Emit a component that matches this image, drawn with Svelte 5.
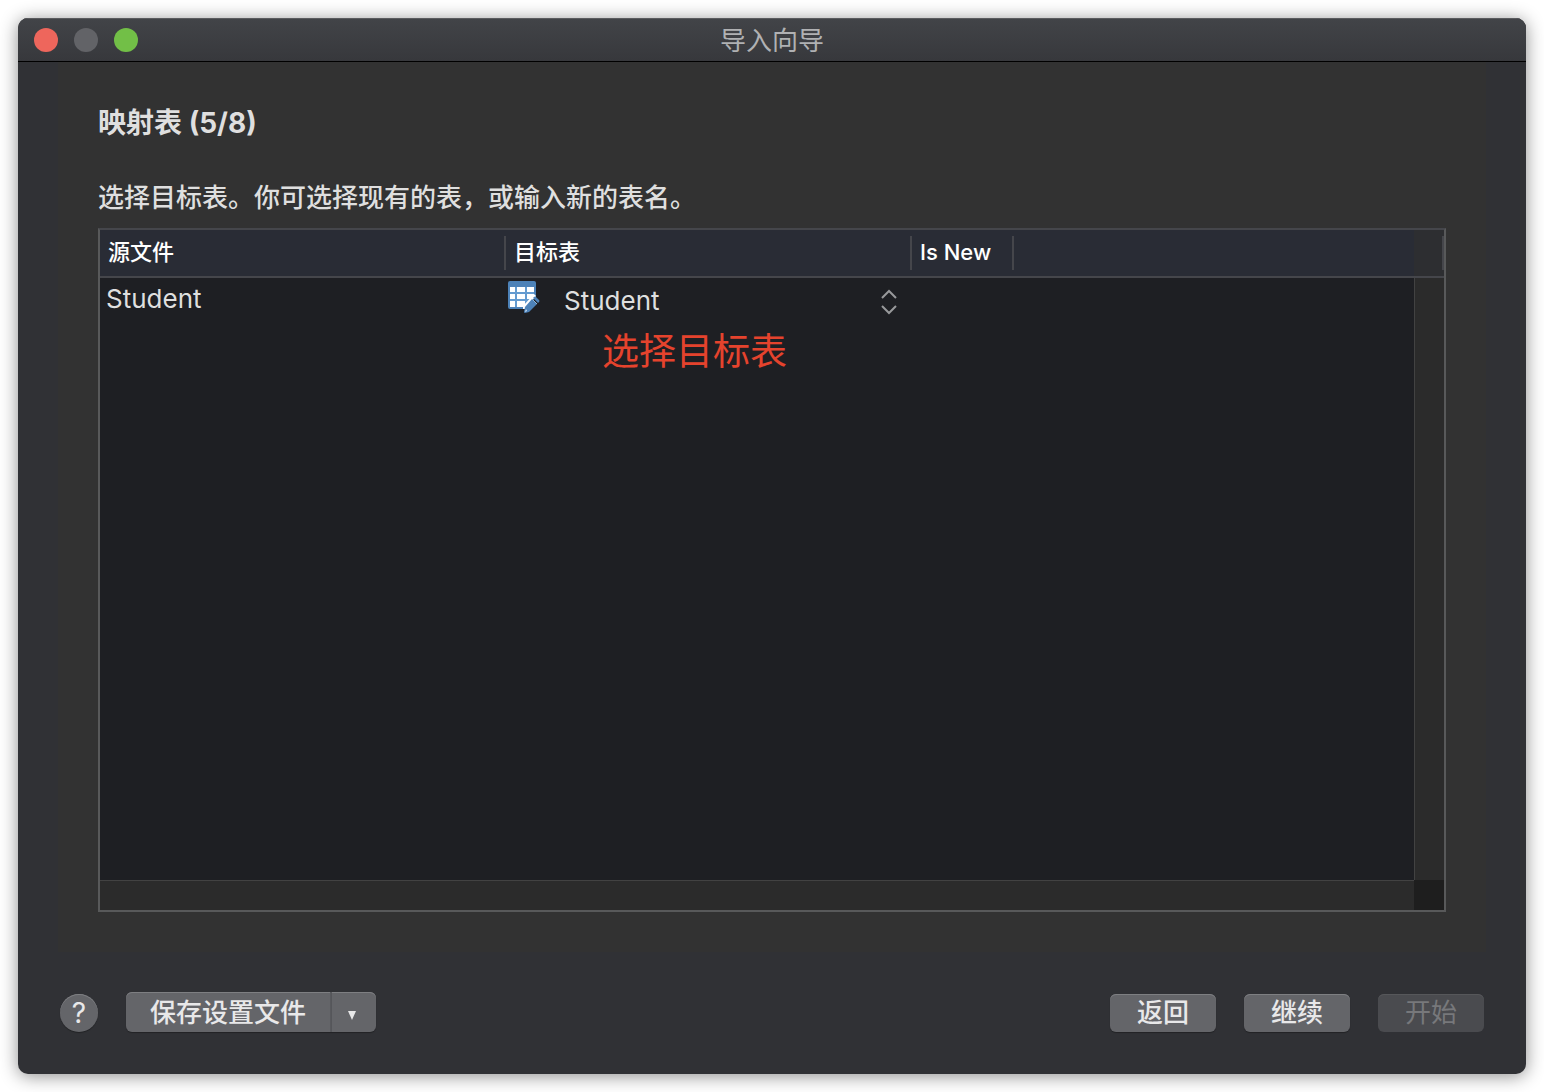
<script lang="ts">
	/**
	 * ImportWizard - Table mapping step of the import wizard window.
	 */
	interface Mapping {
		source: string;
		target: string;
	}

	const step = 5;
	const stepCount = 8;
	const tables = ['Student'];

	let mappings = $state<Mapping[]>([{ source: 'Student', target: 'Student' }]);
</script>

<main class="window" lang="zh-CN">
	<header class="titlebar">
		<div class="lights">
			<button class="light close" aria-label="关闭"></button>
			<button class="light minimize" aria-label="最小化" disabled></button>
			<button class="light zoom" aria-label="缩放"></button>
		</div>
		<span class="title">导入向导</span>
	</header>

	<section class="panel">
		<h1>映射表 ({step}/{stepCount})</h1>
		<p class="description">选择目标表。你可选择现有的表，或输入新的表名。</p>

		<div class="list">
			<table>
				<colgroup>
					<col class="col-name" />
					<col class="col-name" />
					<col class="col-new" />
					<col />
					<col class="col-scroll" />
				</colgroup>
				<thead>
					<tr>
						<th>源文件</th>
						<th>目标表</th>
						<th>Is New</th>
						<th class="filler"></th>
						<th class="corner"></th>
					</tr>
				</thead>
				<tbody>
					{#each mappings as mapping (mapping.source)}
						<tr>
							<td class="source">{mapping.source}</td>
							<td>
								<div class="target">
									<svg class="table-icon" viewBox="0 0 32 34" aria-hidden="true">
										<path d="M2 1h24a2 2 0 0 1 2 2v14L16 29H2a2 2 0 0 1-2-2V3a2 2 0 0 1 2-2z" fill="#4d82b8" />
										<path d="M2 7h24v10l-9 10H2z" fill="#649bd0" />
										<path
											d="M2 7h5v5H2zM9 7h8v5H9zM19 7h7v5h-7zM2 14h5v5H2zM9 14h8v5H9zM19 14h7v5h-7zM2 21h5v6H2zM9 21h8v6H9z"
											fill="#fff"
										/>
										<path d="M26 14l2 2-11 13h-2v-3z" fill="#fff" />
										<path d="M26 17q1-1 2 0l3 3q1 1 0 2l-1 1-5-5z" fill="#4d82b8" />
										<path d="M24 19l5 5-8 8-4 1q-1 0-1-1l1-5z" fill="#4d82b8" />
										<path d="M24 19l5 5" stroke="#8fb6db" />
										<path d="M18 29l1 2-2 1z" fill="#dceaf7" />
									</svg>
									<select aria-label="目标表" bind:value={mapping.target}>
										{#each tables as name}
											<option value={name}>{name}</option>
										{/each}
									</select>
									<svg class="chevrons" viewBox="0 0 16 26" aria-hidden="true">
										<path d="M1 9l7-7 7 7M1 17l7 7 7-7" />
									</svg>
								</div>
								<p class="note">选择目标表</p>
							</td>
							<td></td>
							<td></td>
							<td></td>
						</tr>
					{/each}
				</tbody>
			</table>
			<div class="track vertical"></div>
			<div class="track horizontal"></div>
			<div class="track-corner"></div>
		</div>
	</section>

	<footer class="actions">
		<button class="help" aria-label="帮助">?</button>
		<div class="split">
			<button class="save">保存设置文件</button>
			<button class="more" aria-label="更多">
				<svg viewBox="0 0 8 9" aria-hidden="true"><path d="M0 0h8L4 9z" /></svg>
			</button>
		</div>
		<div class="nav">
			<button>返回</button>
			<button>继续</button>
			<button disabled>开始</button>
		</div>
	</footer>
</main>

<style>
	:global(body) {
		margin: 0;
		background: #fff;
	}

	.window {
		display: flex;
		flex-direction: column;
		box-sizing: border-box;
		min-height: calc(100vh - 36px);
		margin: 18px;
		border-radius: 10px;
		overflow: hidden;
		background: #303135;
		color: #dfdfdf;
		font-family: Inter, 'Noto Sans CJK SC', sans-serif;
		font-size: 26px;
		box-shadow: 0 2px 18px rgba(0, 0, 0, 0.45);
	}

	button,
	select {
		margin: 0;
		padding: 0;
		border: none;
		font: inherit;
		color: inherit;
	}

	.titlebar {
		display: grid;
		grid-template-columns: 1fr auto 1fr;
		align-items: center;
		box-sizing: border-box;
		height: 44px;
		padding: 0 16px;
		border-bottom: 1px solid #000;
		background: linear-gradient(#424448, #37383c);
		box-shadow: inset 0 1px #5a5b5e;
	}

	.lights {
		display: flex;
		gap: 16px;
	}

	.light {
		width: 24px;
		height: 24px;
		border-radius: 50%;
	}

	.close {
		background: #ee665c;
	}

	.minimize {
		background: #626367;
	}

	.zoom {
		background: #72bf47;
	}

	.title {
		padding-top: 2px;
		line-height: 40px;
		color: #b0b1b3;
	}

	.panel {
		display: flex;
		flex: 1;
		flex-direction: column;
		margin: 0 40px;
		padding: 40px;
		background: #323232;
	}

	h1 {
		margin: 0;
		font-size: 28px;
		font-weight: 700;
		line-height: 42px;
	}

	.description {
		margin: 34px 0 10px;
		font-weight: 500;
		line-height: 40px;
	}

	/* the table lies under the scroll tracks, its header runs above them */
	.list {
		display: grid;
		flex: 1;
		grid-template-columns: 1fr 30px;
		grid-template-rows: 48px 1fr 30px;
		border: 2px solid #58595a;
		border-top-color: #45464b;
		background: #1e1f23;
	}

	table {
		grid-area: 1 / 1 / 3 / 3;
		align-self: start;
		width: 100%;
		table-layout: fixed;
		border-collapse: separate;
		border-spacing: 0;
	}

	.col-name {
		width: 406px;
	}

	.col-new {
		width: 102px;
	}

	.col-scroll {
		width: 30px;
	}

	th {
		position: relative;
		box-sizing: border-box;
		height: 48px;
		padding: 0 8px 2px;
		border-bottom: 2px solid #45464b;
		background: #292c35;
		color: #fff;
		font-size: 22px;
		font-weight: 500;
		line-height: 32px;
		text-align: left;
	}

	th::after {
		content: '';
		position: absolute;
		top: 6px;
		right: 0;
		bottom: 6px;
		width: 2px;
		background: #45464b;
	}

	.filler::after {
		display: none;
	}

	.corner {
		background: #2d2e31;
	}

	td {
		padding: 0;
		vertical-align: top;
	}

	.source {
		padding-left: 6px;
		line-height: 42px;
	}

	.target {
		display: flex;
		align-items: center;
		height: 46px;
		padding: 0 15px 0 2px;
	}

	.table-icon {
		flex: none;
		align-self: flex-start;
		width: 32px;
		height: 34px;
		margin-top: 2px;
	}

	select {
		flex: 1;
		min-width: 0;
		height: 40px;
		margin: 0 0 2px 24px;
		appearance: none;
		background: transparent;
	}

	option {
		background: #1e1f23;
	}

	.chevrons {
		flex: none;
		width: 16px;
		height: 26px;
		margin-top: 2px;
		fill: none;
		stroke: #98999b;
		stroke-width: 2;
		pointer-events: none;
	}

	.note {
		margin: 0 0 0 96px;
		color: #e5432d;
		font-size: 37px;
		line-height: 56px;
	}

	.track {
		background: #2b2b2b;
	}

	.vertical {
		grid-area: 2 / 2;
		border-left: 1px solid #424242;
	}

	.horizontal {
		grid-area: 3 / 1;
		border-top: 1px solid #424242;
	}

	.track-corner {
		grid-area: 3 / 2;
		background: #1e1e1e;
	}

	.actions {
		display: flex;
		align-items: flex-end;
		padding: 40px 42px 42px;
	}

	.actions button {
		background: #646569;
		color: #e8e8e9;
		font-weight: 500;
		line-height: 36px;
		box-shadow:
			inset 0 1px #7e7f82,
			0 1px 1px rgba(0, 0, 0, 0.3);
	}

	.actions .help {
		width: 38px;
		height: 38px;
		border-radius: 50%;
		font-size: 28px;
		font-weight: 400;
	}

	.split {
		display: flex;
		height: 40px;
		margin-left: 28px;
	}

	.split .save {
		padding: 2px 24px 0;
		border-right: 2px solid #58595d;
		border-radius: 6px 0 0 6px;
	}

	.split .more {
		width: 44px;
		padding-right: 4px;
		border-radius: 0 6px 6px 0;
	}

	.more svg {
		display: block;
		width: 8px;
		height: 9px;
		margin: 6px auto 0;
		fill: #e8e8e9;
	}

	.nav {
		display: flex;
		gap: 28px;
		margin-left: auto;
	}

	.nav button {
		width: 106px;
		height: 38px;
		border-radius: 6px;
	}

	.nav button:disabled {
		background: #4a4b4f;
		color: #77787b;
		font-weight: 400;
		box-shadow: inset 0 1px #56575a;
	}
</style>
